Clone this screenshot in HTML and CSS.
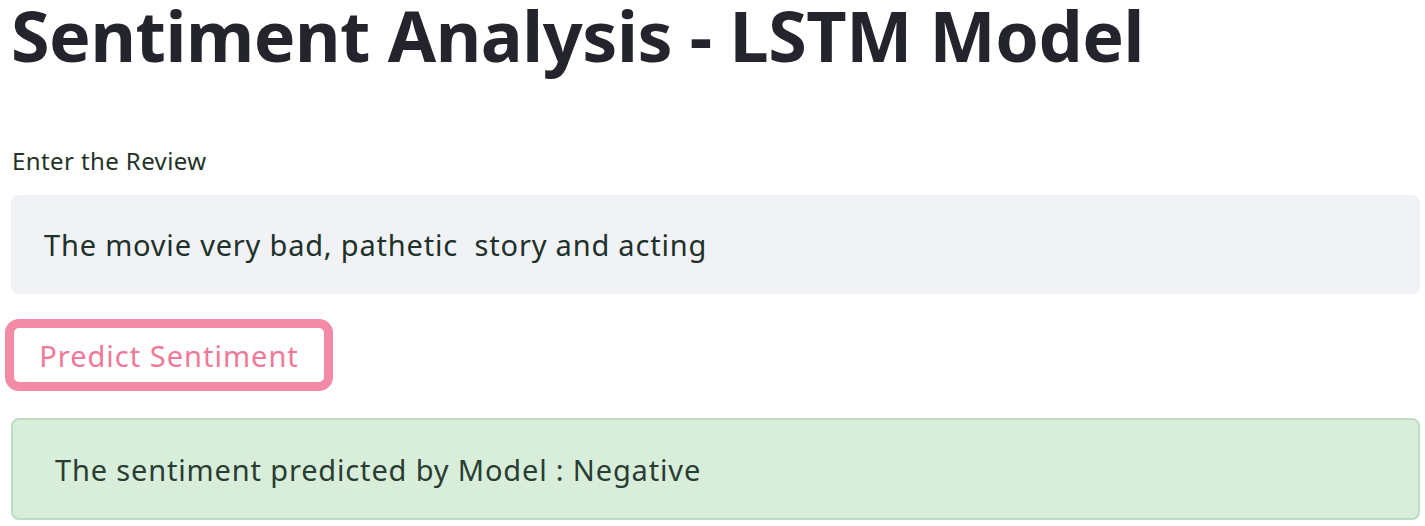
FILE: index.html
```html
<!DOCTYPE html>
<html lang="en">
<head>
<meta charset="utf-8">
<title>Sentiment Analysis - LSTM Model</title>
<link rel="stylesheet" href="styles.css">
</head>
<body>
<main class="app">
  <h1 class="title">Sentiment Analysis - LSTM Model</h1>
  <div class="field">
    <label class="field-label" for="review">Enter the Review</label>
    <div class="input-box" id="review">The movie very bad, pathetic  story and acting</div>
  </div>
  <div class="btn-row">
    <button class="btn" type="button">Predict Sentiment</button>
  </div>
  <div class="alert-success">The sentiment predicted by Model : Negative</div>
</main>
</body>
</html>
```

FILE: styles.css
```css
html, body {
  margin: 0;
  padding: 0;
  background: #ffffff;
}

body {
  font-family: "Noto Sans", "Open Sans", sans-serif;
  color: #262730;
}

.app {
  display: flex;
  flex-direction: column;
  padding: 0 5px 0 11px;
  width: 1409px;
}

.title {
  margin: 0;
  font-size: 70px;
  line-height: 70px;
  font-weight: 700;
  color: #24252c;
  height: 88px;
  letter-spacing: -0.45px;
}

.field {
  display: flex;
  flex-direction: column;
  margin-top: 58px;
}

.field-label {
  font-size: 24px;
  line-height: 30px;
  color: #1f3328;
  padding-left: 1px;
  letter-spacing: 0.4px;
}

.input-box {
  margin-top: 19px;
  height: 99px;
  box-sizing: border-box;
  background: #f0f2f6;
  border-radius: 8px;
  padding: 0 0 0 33px;
  display: flex;
  align-items: center;
  font-size: 29px;
  letter-spacing: 0.8px;
  color: #20302a;
  white-space: pre;
}

.btn-row {
  display: flex;
  margin-top: 25px;
  margin-left: -6px;
}

.btn {
  font-family: inherit;
  background: #ffffff;
  border: 9px solid #f38ba6;
  border-radius: 14px;
  width: 328px;
  height: 72px;
  font-size: 29px;
  letter-spacing: 1px;
  color: #f07898;
  padding: 0;
  cursor: pointer;
}

.alert-success {
  margin-top: 27px;
  height: 102px;
  box-sizing: border-box;
  background: #d8eedb;
  border: 2px solid #bcdec2;
  border-radius: 8px;
  display: flex;
  align-items: center;
  padding-left: 42px;
  font-size: 29px;
  letter-spacing: 0.84px;
  color: #2a3d32;
}
```
